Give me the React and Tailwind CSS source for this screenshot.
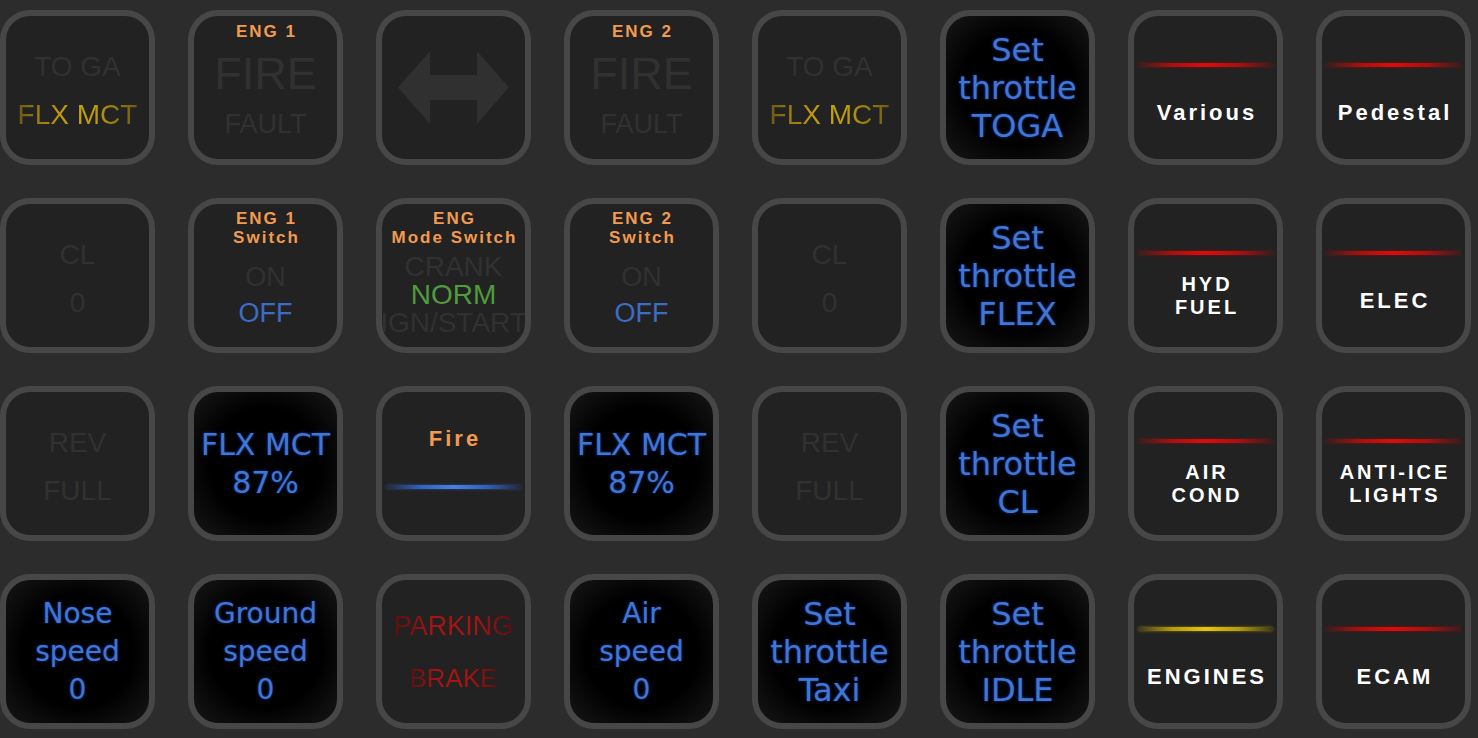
import React from "react";

const frame =
  "w-[155px] h-[155px] rounded-[30px] border-[6px] border-[#474747] overflow-hidden flex flex-col items-center whitespace-nowrap";
const dark = "bg-[#222222]";
const black =
  "bg-[radial-gradient(ellipse_at_center,#000000_55%,#171717_100%)]";
const arial = "font-['Liberation_Sans',Arial,sans-serif]";
const dim = "text-[#313131]";
const orange = "text-[#f29a50]";
const yellowGrad =
  "bg-[linear-gradient(90deg,#6e5a12,#bd9a10_35%,#c4a010_50%,#bd9a10_65%,#6e5a12)] bg-clip-text text-transparent";
const redGrad =
  "bg-[linear-gradient(90deg,#5a0f0f,#a51414_30%,#a81414_50%,#a51414_70%,#5a0f0f)] bg-clip-text text-transparent";

function Dim2({ a, b, bClass }) {
  return (
    <div className={`${frame} ${dark} ${arial} text-[28px] leading-none`}>
      <div className={`mt-[37px] ${dim}`}>{a}</div>
      <div className={`mt-[20px] ${bClass || dim}`}>{b}</div>
    </div>
  );
}

function Header({ lines, mt }) {
  return (
    <div
      className={`${mt} ${orange} text-[17px] leading-[19px] font-bold tracking-[2px] pl-[2px] text-center`}
    >
      {lines.map((l) => (
        <div key={l}>{l}</div>
      ))}
    </div>
  );
}

function EngFire({ n }) {
  return (
    <div className={`${frame} ${dark} ${arial}`}>
      <Header lines={[`ENG ${n}`]} mt="mt-[6px]" />
      <div className={`mt-[10px] text-[45px] leading-none ${dim}`}>FIRE</div>
      <div className={`mt-[15px] text-[27px] leading-none ${dim}`}>FAULT</div>
    </div>
  );
}

function EngSwitch({ n }) {
  return (
    <div className={`${frame} ${dark} ${arial}`}>
      <Header lines={[`ENG ${n}`, "Switch"]} mt="mt-[5px]" />
      <div className={`mt-[17px] text-[27px] leading-none ${dim}`}>ON</div>
      <div className="mt-[9px] text-[27px] leading-none text-[#3d6cc6]">OFF</div>
    </div>
  );
}

function ModeSwitch() {
  return (
    <div className={`${frame} ${dark} ${arial}`}>
      <Header lines={["ENG", "Mode Switch"]} mt="mt-[5px]" />
      <div className="mt-[6px] text-[28px] leading-[28px] text-center">
        <div className={dim}>CRANK</div>
        <div className="text-[#4f9b3d]">NORM</div>
        <div className={dim}>IGN/START</div>
      </div>
    </div>
  );
}

function Arrow() {
  return (
    <div className={`${frame} ${dark} justify-center`}>
      <svg width="111" height="73" viewBox="0 0 111 73">
        <path
          d="M0 36.5 L32 0 L32 24 L79 24 L79 0 L111 36.5 L79 73 L79 49 L32 49 L32 73 Z"
          fill="#303030"
        />
      </svg>
    </div>
  );
}

function Display({ lines, size }) {
  return (
    <div
      className={`${frame} ${black} justify-center font-['DejaVu_Sans',Verdana,sans-serif] leading-[38px] text-[#4076d6] text-center [text-shadow:0_0_2px_#16357a,0_0_4px_#0a1a45] ${size}`}
    >
      {lines.map((l, i) => (
        <div key={i}>{l}</div>
      ))}
    </div>
  );
}

function Line({ color }) {
  const g = {
    red: "bg-[linear-gradient(90deg,rgba(150,10,10,0.15),#a81010_25%,#dc0c0c_50%,#a81010_75%,rgba(150,10,10,0.15))] shadow-[0_0_3px_rgba(200,0,0,0.5)]",
    yellow:
      "bg-[linear-gradient(90deg,rgba(160,140,10,0.2),#b49a10_25%,#e6c60c_50%,#b49a10_75%,rgba(160,140,10,0.2))] shadow-[0_0_3px_rgba(220,190,0,0.5)]",
    blue: "bg-[linear-gradient(90deg,rgba(40,80,170,0.15),#3060b8_25%,#4a7ee0_50%,#3060b8_75%,rgba(40,80,170,0.15))] shadow-[0_0_3px_rgba(60,110,220,0.5)]",
  }[color];
  return <div className={`w-[135px] h-[4px] rounded-full ${g}`} />;
}

function Category({ lines, color = "red" }) {
  const two = lines.length > 1;
  return (
    <div className={`${frame} ${dark} ${arial}`}>
      <div className="mt-[47px]">
        <Line color={color} />
      </div>
      <div
        className={`flex-1 flex flex-col items-center justify-center text-white font-bold tracking-[3px] pl-[3px] ${
          two ? "text-[20px] leading-[23px] mb-[10px]" : "text-[22px] leading-none"
        }`}
      >
        {lines.map((l) => (
          <div key={l}>{l}</div>
        ))}
      </div>
    </div>
  );
}

function FireCat() {
  return (
    <div className={`${frame} ${dark} ${arial}`}>
      <div className={`mt-[36px] text-[22px] leading-none font-bold tracking-[3px] pl-[3px] ${orange}`}>
        Fire
      </div>
      <div className="mt-[35px]">
        <Line color="blue" />
      </div>
    </div>
  );
}

function Parking() {
  return (
    <div className={`${frame} ${dark} ${arial}`}>
      <div className={`mt-[33px] text-[27px] leading-none ${redGrad}`}>PARKING</div>
      <div className={`mt-[25px] text-[26px] leading-none ${redGrad}`}>BRAKE</div>
    </div>
  );
}

export default function App() {
  return (
    <div className="w-[1478px] h-[738px] bg-[#2c2c2c] overflow-hidden">
      <div className="grid grid-cols-[repeat(8,155px)] auto-rows-[155px] gap-[33px] pt-[10px]">
        {/* Row 1 */}
        <Dim2 a="TO GA" b="FLX MCT" bClass={yellowGrad} />
        <EngFire n={1} />
        <Arrow />
        <EngFire n={2} />
        <Dim2 a="TO GA" b="FLX MCT" bClass={yellowGrad} />
        <Display lines={["Set", "throttle", "TOGA"]} size="text-[32px]" />
        <Category lines={["Various"]} />
        <Category lines={["Pedestal"]} />

        {/* Row 2 */}
        <Dim2 a="CL" b="0" />
        <EngSwitch n={1} />
        <ModeSwitch />
        <EngSwitch n={2} />
        <Dim2 a="CL" b="0" />
        <Display lines={["Set", "throttle", "FLEX"]} size="text-[32px]" />
        <Category lines={["HYD", "FUEL"]} />
        <Category lines={["ELEC"]} />

        {/* Row 3 */}
        <Dim2 a="REV" b="FULL" />
        <Display lines={["FLX MCT", "87%"]} size="text-[30px]" />
        <FireCat />
        <Display lines={["FLX MCT", "87%"]} size="text-[30px]" />
        <Dim2 a="REV" b="FULL" />
        <Display lines={["Set", "throttle", "CL"]} size="text-[32px]" />
        <Category lines={["AIR", "COND"]} />
        <Category lines={["ANTI-ICE", "LIGHTS"]} />

        {/* Row 4 */}
        <Display lines={["Nose", "speed", "0"]} size="text-[28px]" />
        <Display lines={["Ground", "speed", "0"]} size="text-[28px]" />
        <Parking />
        <Display lines={["Air", "speed", "0"]} size="text-[28px]" />
        <Display lines={["Set", "throttle", "Taxi"]} size="text-[32px]" />
        <Display lines={["Set", "throttle", "IDLE"]} size="text-[32px]" />
        <Category lines={["ENGINES"]} color="yellow" />
        <Category lines={["ECAM"]} />
      </div>
    </div>
  );
}
